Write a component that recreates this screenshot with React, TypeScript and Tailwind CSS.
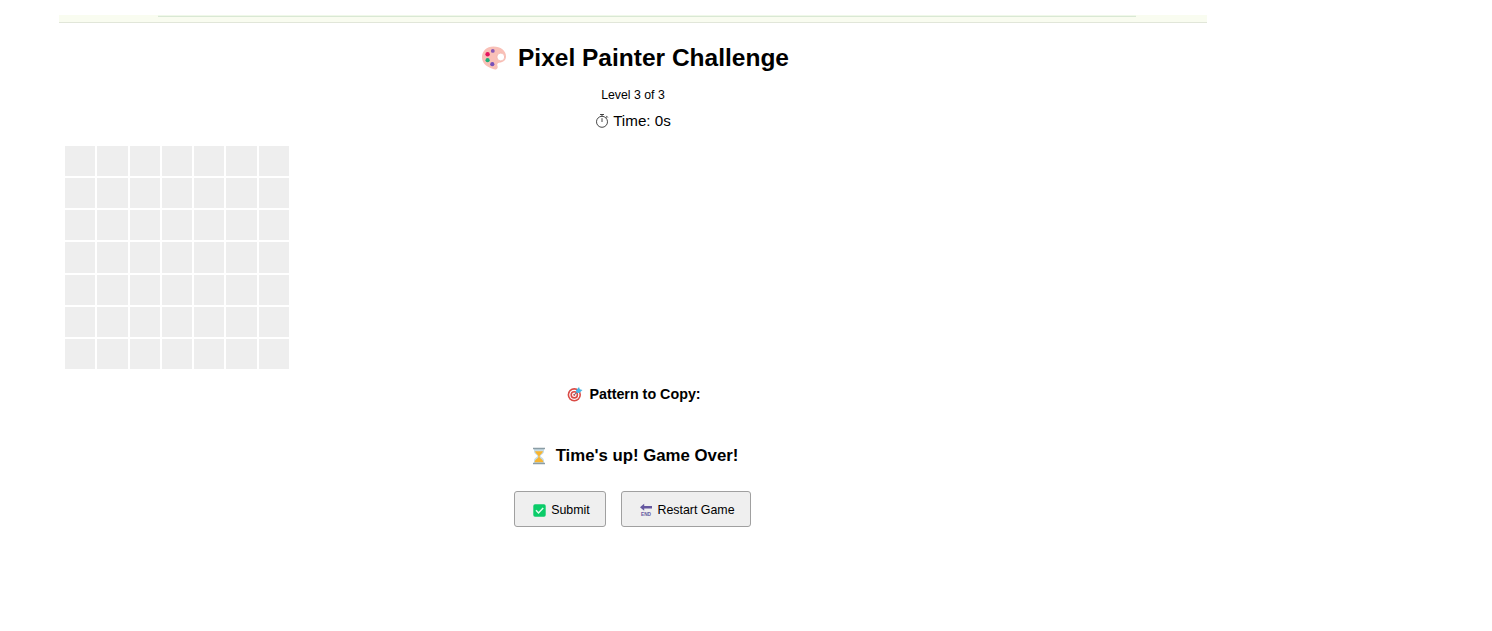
import { useState } from "react";

const GRID_SIZE = 7;
const TOTAL_LEVELS = 3;

function PaletteIcon() {
  return (
    <svg viewBox="0 0 26 26" className="mr-[11px] h-[26px] w-[26px] shrink-0" aria-hidden="true">
      <path
        d="M12.500 1.500C5.500 1.500 1 6.300 1 12c0 5.500 3.700 9 7.500 10.500 2.500 1 4.200 2.400 6.500 2 1.900-.4 2-2.400 1.400-3.900-.5-1.500.2-2.500 1.800-2.800 4.300-.5 6.800-2.700 6.800-6.300C25 5.500 19.500 1.500 12.500 1.500z"
        fill="#f9c0b7"
      />
      <circle cx="19.800" cy="12" r="3.900" fill="#fff" stroke="#f0aaa0" strokeWidth=".7" />
      <circle cx="11.800" cy="5.900" r="1.900" fill="#8757b5" />
      <circle cx="6.600" cy="9.300" r="2.200" fill="#e5145f" />
      <circle cx="6.600" cy="15.200" r="2.100" fill="#20ad78" />
      <circle cx="11.300" cy="19.200" r="2.100" fill="#7650ba" />
    </svg>
  );
}

function StopwatchIcon() {
  return (
    <svg
      viewBox="0 0 14 16"
      className="mr-[4px] h-[16px] w-[14px] shrink-0"
      fill="none"
      stroke="#333"
      strokeWidth=".9"
      aria-hidden="true"
    >
      <circle cx="7" cy="8.800" r="5.500" />
      <path d="M5 1.500h4M7 1.500v1.800M7 5.200V9M11.200 2.900l1.600 1.600M10.900 4.800l1-1" />
    </svg>
  );
}

function TargetIcon() {
  return (
    <svg viewBox="0 0 16 16" className="mr-[6px] h-[16px] w-[16px] shrink-0" aria-hidden="true">
      <circle cx="7.300" cy="8.800" r="6.700" fill="#d94a45" />
      <circle cx="7.300" cy="8.800" r="5.100" fill="#fff" />
      <circle cx="7.300" cy="8.800" r="3.900" fill="#d94a45" />
      <circle cx="7.300" cy="8.800" r="2.300" fill="#fff" />
      <circle cx="7.300" cy="8.800" r="1.100" fill="#d94a45" />
      <path d="M7.300 8.800l4.500-4.500" stroke="#4f7893" strokeWidth="1" />
      <path d="M8.900 4.400L12 1l.8 2.200 2.700.7-3.200 3.200-2.700-.4z" fill="#48b5e3" />
    </svg>
  );
}

function HourglassIcon() {
  return (
    <svg viewBox="0 0 14 18" className="mr-[10px] h-[18px] w-[14px] shrink-0" aria-hidden="true">
      <path d="M2 2h10v2.500C12 6.800 8.500 8 8.500 9S12 11.200 12 13.500V16H2v-2.500C2 11.200 5.500 10 5.500 9S2 6.800 2 4.500z" fill="#c5dbe5" />
      <path d="M3 4.200h8C10.500 6.500 7.600 7.400 7.500 9.800c.3 1.800 3.400 2.400 4 5.400H2.500c.6-3 3.700-3.600 4-5.400C6.400 7.400 3.500 6.500 3 4.200z" fill="#f8b530" />
      <path d="M1 .8h12v1.400H1zM1 15.800h12v1.400H1z" fill="#8b9da5" />
    </svg>
  );
}

function CheckIcon() {
  return (
    <svg viewBox="0 0 13 13" className="mr-[5px] h-[13px] w-[13px] shrink-0" aria-hidden="true">
      <rect x=".3" y=".3" width="12.400" height="12.400" rx="1.700" fill="#0bcc69" />
      <path d="M3 6.300l2.500 2.600 4.700-4.800" fill="none" stroke="#dfffee" strokeWidth="1.500" />
    </svg>
  );
}

function EndIcon() {
  return (
    <svg viewBox="0 0 12 14" className="mr-[5px] h-[14px] w-[12px] shrink-0" aria-hidden="true">
      <path d="M0 4.300L4.200.8v2.300H12v2.500H4.200v2.200z" fill="#6558a0" />
      <text
        x="1"
        y="13"
        textLength="10"
        lengthAdjust="spacingAndGlyphs"
        className="font-['Liberation_Sans',sans-serif] text-[5px] font-bold"
        fill="#6558a0"
      >
        END
      </text>
    </svg>
  );
}

export default function App() {
  const [level, setLevel] = useState(3);
  const [painted, setPainted] = useState<number[]>([]);
  const gameOver = true;

  const restart = () => {
    setLevel(3);
    setPainted([]);
  };

  const togglePixel = (index: number) => {
    if (gameOver) return;
    setPainted((prev) =>
      prev.includes(index) ? prev.filter((i) => i !== index) : [...prev, index]
    );
  };

  return (
    <div className="min-h-screen bg-white pt-[15px] pl-[59px] font-['Liberation_Sans',Arial,sans-serif] text-black">
      <div className="w-[1148px]">
        <div className="h-[8px] border-b border-[#e1e6d9] bg-[#f9fcf0] pl-[99px]">
          <div className="h-[2px] w-[978px] border-b border-[#d9e8d4] bg-[#f0f8e9]" />
        </div>

        <h1 className="mt-[20px] flex h-[30px] items-center justify-center pl-[4px] text-[24.500px] font-bold leading-[30px]">
          <PaletteIcon />
          Pixel Painter Challenge
        </h1>
        <p className="mt-[14px] text-center text-[12.300px] leading-[16px]">
          Level {level} of {TOTAL_LEVELS}
        </p>
        <div className="mt-[8px] flex h-[20px] items-center justify-center text-[15.200px] leading-[20px]">
          <StopwatchIcon />
          Time: 0s
        </div>

        <div className="mt-[15px] ml-[6px] grid h-[223px] w-[224px] grid-cols-7 grid-rows-7 gap-[2px]">
          {Array.from({ length: GRID_SIZE * GRID_SIZE }, (_, i) => (
            <div
              key={i}
              onClick={() => togglePixel(i)}
              className={painted.includes(i) ? "bg-black" : "bg-[#eeeeee]"}
            />
          ))}
        </div>

        <h3 className="mt-[15px] flex h-[20px] items-center justify-center pl-[2px] text-[14.300px] font-bold leading-[20px]">
          <TargetIcon />
          Pattern to Copy:
        </h3>
        <h2 className="mt-[41px] flex h-[22px] items-center justify-center pl-[4px] text-[16.800px] font-bold leading-[22px]">
          <HourglassIcon />
          Time's up! Game Over!
        </h2>

        <div className="mt-[24px] flex justify-center gap-[15px] pr-px">
          <button className="flex h-[36px] w-[92px] items-center justify-center rounded-[3px] border border-[#a0a0a0] bg-[#efefef] pt-[2px] pl-[3px] text-[12.400px]">
            <CheckIcon />
            Submit
          </button>
          <button
            onClick={restart}
            className="flex h-[36px] w-[130px] items-center justify-center rounded-[3px] border border-[#a0a0a0] bg-[#efefef] pt-[2px] pl-[3px] text-[12.400px]"
          >
            <EndIcon />
            Restart Game
          </button>
        </div>
      </div>
    </div>
  );
}
